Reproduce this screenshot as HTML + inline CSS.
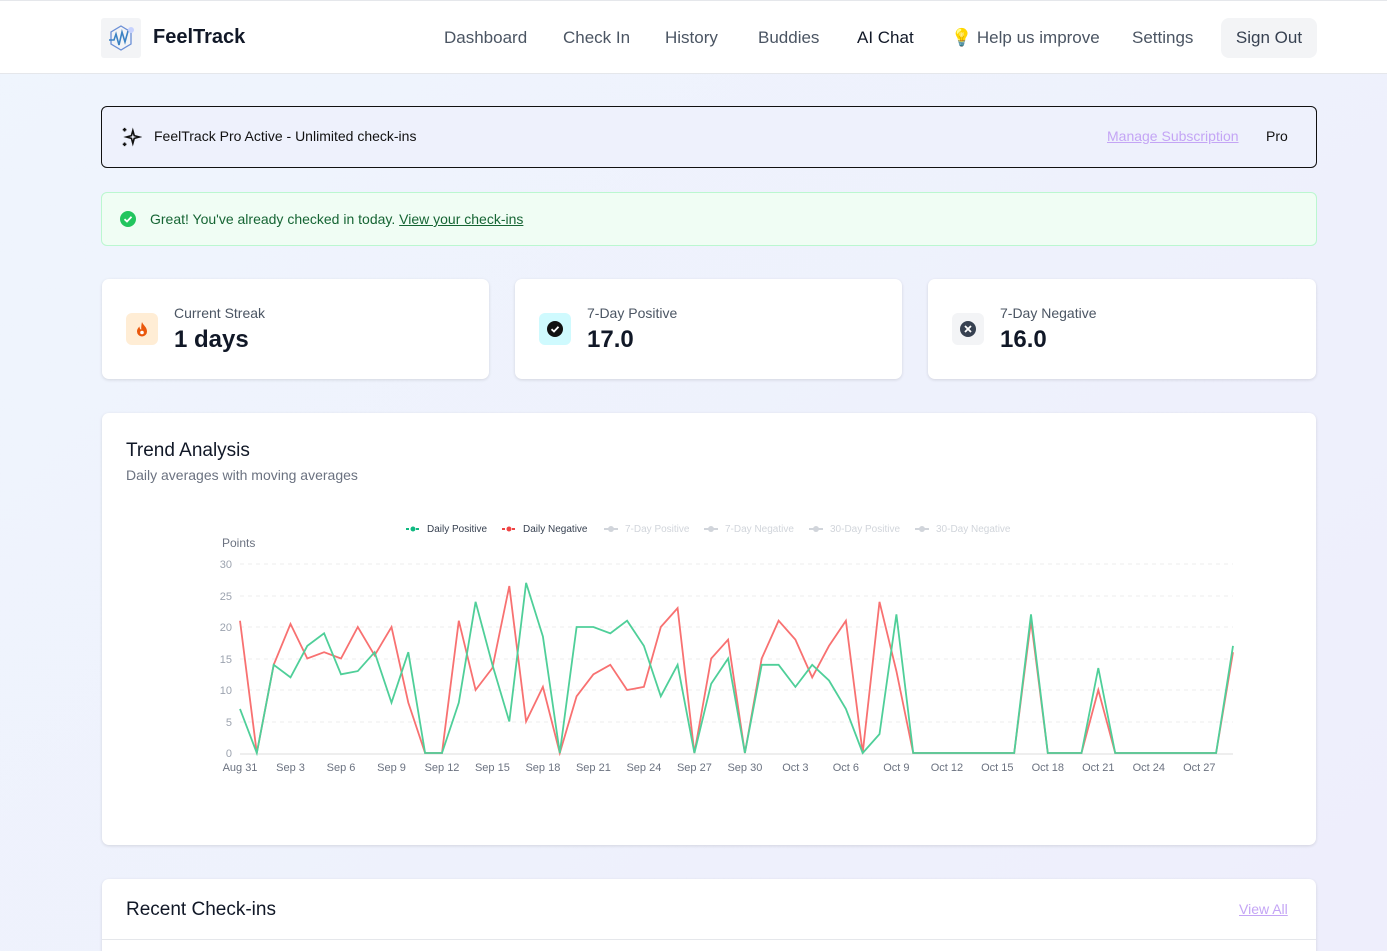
<!DOCTYPE html>
<html style="height:951px;overflow:hidden"><head><meta charset="utf-8"><style>
*{box-sizing:border-box;margin:0;padding:0}
body{width:1387px;height:951px;overflow:hidden;font-family:"Liberation Sans",sans-serif;background:linear-gradient(135deg,#eff5fd,#eeeefc);color:#111827;position:relative}
.nav{position:absolute;left:0;top:0;width:1387px;height:74px;background:#fff;border-top:1px solid #e5e7eb;border-bottom:1px solid #e5e7eb}
.logo{position:absolute;left:101px;top:17px;width:40px;height:40px;background:#f3f4f6;border-radius:3px}
.brand{position:absolute;left:153px;top:25px;font-size:20px;font-weight:bold;color:#111827}
.nl{position:absolute;top:27px;font-size:17px;color:#4b5563}
.so{position:absolute;left:1221px;top:17px;width:96px;height:40px;background:#f3f4f6;border-radius:8px;font-size:17px;color:#374151;text-align:center;line-height:40px}
.pro{position:absolute;left:101px;top:106px;width:1216px;height:62px;border:1px solid #111;border-radius:6px;background:#eef1fc}
.ok{position:absolute;left:101px;top:192px;width:1216px;height:54px;border:1px solid #bbf7d0;border-radius:6px;background:#f0fdf4}
.card{position:absolute;background:#fff;border-radius:7px;box-shadow:0 1px 3px rgba(0,0,0,.12)}
.ic{position:absolute;left:24px;top:34px;width:32px;height:32px;border-radius:6px}
.lbl{position:absolute;left:72px;top:26px;font-size:14px;color:#4b5563}
.val{position:absolute;left:72px;top:47px;font-size:24px;font-weight:bold;color:#111827}
</style></head><body>
<div class="nav">
<div class="logo"><svg width="40" height="40" viewBox="0 0 40 40"><path d="M20 8 L30 14 L30 26 L20 32 L10 26 L10 14Z" fill="none" stroke="#6b8fd6" stroke-width="1.3"/><path d="M8 22 L13 22 L15 16 L18 27 L21 14 L24 24 L27 13" fill="none" stroke="#3b82c4" stroke-width="1.6"/><circle cx="30" cy="12" r="3" fill="#c7d2fe"/></svg></div>
<div class="brand">FeelTrack</div>
<div class="nl" style="left:444px">Dashboard</div>
<div class="nl" style="left:563px">Check In</div>
<div class="nl" style="left:665px">History</div>
<div class="nl" style="left:758px">Buddies</div>
<div class="nl" style="left:857px;color:#111827">AI Chat</div>
<div class="nl" style="left:951px">💡 Help us improve</div>
<div class="nl" style="left:1132px">Settings</div>
<div class="so">Sign Out</div>
</div>
<div class="pro">
<svg style="position:absolute;left:18px;top:19px" width="22" height="22" viewBox="0 0 24 24" fill="none" stroke="#111" stroke-width="1.8"><path d="M14 5 L15.5 10.5 L21 12 L15.5 13.5 L14 19 L12.5 13.5 L7 12 L12.5 10.5Z"/><path d="M5 2v4M3 4h4M5 18v4M3 20h4"/></svg>
<div style="position:absolute;left:52px;top:21px;font-size:14px;color:#111">FeelTrack Pro Active - Unlimited check-ins</div>
<div style="position:absolute;left:1005px;top:21px;font-size:14px;color:#c4a5f5;text-decoration:underline">Manage Subscription</div>
<div style="position:absolute;left:1164px;top:21px;font-size:14px;color:#111">Pro</div>
</div>
<div class="ok">
<svg style="position:absolute;left:18px;top:18px" width="16" height="16" viewBox="0 0 16 16"><circle cx="8" cy="8" r="8" fill="#22c55e"/><path d="M4.5 8.2 L7 10.5 L11.5 5.8" fill="none" stroke="#fff" stroke-width="1.8"/></svg>
<div style="position:absolute;left:48px;top:18px;font-size:14px;color:#166534">Great! You've already checked in today. <span style="text-decoration:underline">View your check-ins</span></div>
</div>
<div class="card" style="left:102px;top:279px;width:387px;height:100px"><div class="ic" style="background:#ffedd5"><svg width="32" height="32" viewBox="0 0 32 32"><path d="M16 9 C17 12 21 14 21 18.5 A5 5 0 0 1 11 18.5 C11 16 12.5 14.5 13.5 13.5 C13.5 15.5 14.5 16.5 15.3 16.5 C15 14 15.5 11 16 9Z" fill="#ea580c"/><circle cx="16" cy="19.5" r="1.8" fill="#fff"/></svg></div><div class="lbl">Current Streak</div><div class="val">1 days</div></div>
<div class="card" style="left:515px;top:279px;width:387px;height:100px"><div class="ic" style="background:#cffafe"><svg width="32" height="32" viewBox="0 0 32 32"><circle cx="16" cy="16" r="8" fill="#111"/><path d="M12.5 16.2 L15 18.5 L19.5 13.8" fill="none" stroke="#fff" stroke-width="1.8"/></svg></div><div class="lbl">7-Day Positive</div><div class="val">17.0</div></div>
<div class="card" style="left:928px;top:279px;width:388px;height:100px"><div class="ic" style="background:#f3f4f6"><svg width="32" height="32" viewBox="0 0 32 32"><circle cx="16" cy="16" r="8" fill="#374151"/><path d="M13 13 L19 19 M19 13 L13 19" stroke="#fff" stroke-width="1.8"/></svg></div><div class="lbl">7-Day Negative</div><div class="val">16.0</div></div>
<div class="card" style="left:102px;top:413px;width:1214px;height:432px">
<div style="position:absolute;left:24px;top:27px;font-size:19px;color:#111827">Trend Analysis</div>
<div style="position:absolute;left:24px;top:54px;font-size:14px;color:#6b7280">Daily averages with moving averages</div>
</div>
<svg style="position:absolute;left:0;top:0" width="1387" height="951" font-family="Liberation Sans,sans-serif">
<g font-size="10">
<path d="M406 529h14" stroke="#10b981" stroke-width="2" stroke-dasharray="3 2"/><circle cx="413" cy="529" r="2.5" fill="#10b981"/><text x="427" y="532" fill="#374151">Daily Positive</text>
<path d="M502 529h14" stroke="#ef4444" stroke-width="2" stroke-dasharray="3 2"/><circle cx="509" cy="529" r="2.5" fill="#ef4444"/><text x="523" y="532" fill="#374151">Daily Negative</text>
<g fill="#d1d5db"><path d="M604 529h14M704 529h14M809 529h14M915 529h14" stroke="#d1d5db" stroke-width="2"/><circle cx="611" cy="529" r="3"/><circle cx="711" cy="529" r="3"/><circle cx="816" cy="529" r="3"/><circle cx="922" cy="529" r="3"/>
<text x="625" y="532">7-Day Positive</text><text x="725" y="532">7-Day Negative</text><text x="830" y="532">30-Day Positive</text><text x="936" y="532">30-Day Negative</text></g>
</g>
<text x="222" y="547" font-size="12" fill="#6b7280">Points</text>
<g stroke="#eee" stroke-dasharray="4 4"><path d="M240 564H1233M240 596H1233M240 627H1233M240 659H1233M240 690H1233M240 722H1233"/></g>
<path d="M240 754H1233" stroke="#ddd"/>
<g font-size="11" fill="#9ca3af" text-anchor="end"><text x="232" y="568">30</text><text x="232" y="600">25</text><text x="232" y="631">20</text><text x="232" y="663">15</text><text x="232" y="694">10</text><text x="232" y="726">5</text><text x="232" y="757">0</text></g>
<g font-size="11" fill="#6b7280" text-anchor="middle" id="xl"></g>
<polyline id="pn" fill="none" stroke="#f87171" stroke-width="1.8"/>
<polyline id="pp" fill="none" stroke="#4fcf99" stroke-width="1.8"/>
</svg>
<div class="card" style="left:102px;top:879px;width:1214px;height:100px;border-bottom:1px solid #e5e7eb">
<div style="position:absolute;left:24px;top:20px;font-size:19px;color:#111827">Recent Check-ins</div>
<div style="position:absolute;left:1137px;top:22px;font-size:14px;color:#c4a5f5;text-decoration:underline">View All</div>
<div style="position:absolute;left:0;top:60px;width:1214px;border-top:1px solid #e5e7eb"></div>
</div>
<script>
var P=[7,0,14,12,17,19,12.5,13,16,8,16,0,0,8,24,14,5,27,18.5,0,20,20,19,21,17,9,14,0,11,15,0,14,14,10.5,14,11.5,7,0,3,22,0,0,0,0,0,0,0,22,0,0,0,13.5,0,0,0,0,0,0,0,17];
var N=[21,0,14,20.5,15,16,15,20,15.5,20,8,0,0,21,10,13.5,26.5,5,10.5,0,9,12.5,14,10,10.5,20,23,0,15,18,0,15,21,18,12,17,21,0,24,13,0,0,0,0,0,0,0,21,0,0,0,10,0,0,0,0,0,0,0,16];
function pts(a){return a.map(function(v,i){return (240+i*16.83).toFixed(1)+','+(753-v*6.3).toFixed(1)}).join(' ')}
document.getElementById('pp').setAttribute('points',pts(P));
document.getElementById('pn').setAttribute('points',pts(N));
var L=['Aug 31','Sep 3','Sep 6','Sep 9','Sep 12','Sep 15','Sep 18','Sep 21','Sep 24','Sep 27','Sep 30','Oct 3','Oct 6','Oct 9','Oct 12','Oct 15','Oct 18','Oct 21','Oct 24','Oct 27'],g=document.getElementById('xl'),s='';
L.forEach(function(t,i){s+='<text x="'+(240+i*3*16.83).toFixed(1)+'" y="771">'+t+'</text>'});g.innerHTML=s;
</script>
</body></html>
